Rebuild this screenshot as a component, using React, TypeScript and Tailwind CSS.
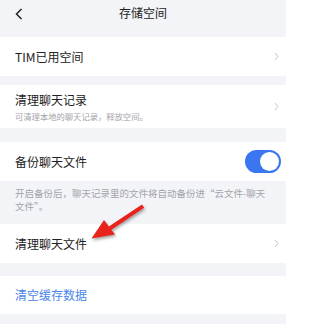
import React from "react";

function Chevron() {
  return (
    <svg width="5" height="9" viewBox="0 0 5 9" className="shrink-0">
      <path d="M1 1l3 3.5L1 8" fill="none" stroke="#c4c5cc" strokeWidth="1" />
    </svg>
  );
}

function Row({ title, sub, className = "" }: { title: string; sub?: string; className?: string }) {
  return (
    <div className={`flex items-center justify-between bg-white pl-[15px] pr-[7px] ${className}`}>
      <div className="flex flex-col">
        <span className="text-[12px] leading-[16px] text-[#222222]">{title}</span>
        {sub && <span className="mt-[3px] text-[8.3px] leading-[10px] text-[#a3a4aa]">{sub}</span>}
      </div>
      <Chevron />
    </div>
  );
}

export default function App() {
  return (
    <div
      className="relative h-[324px] w-[293px] overflow-hidden bg-white"
      style={{ fontFamily: '"Noto Sans CJK SC", "Noto Sans", sans-serif' }}
    >
      <div className="flex h-full w-[286px] flex-col bg-[#f3f4f8]">
        <div className="relative flex h-[26px] items-center justify-center">
          <svg width="8" height="12" viewBox="0 0 8 12" className="absolute left-[15px] top-[8px]">
            <path d="M6.5 1L1.5 6l5 5" fill="none" stroke="#222" strokeWidth="1.5" />
          </svg>
          <span className="text-[12px] leading-[16px] text-[#222222]">存储空间</span>
        </div>
        <div className="h-[11px]" />
        <Row title="TIM已用空间" className="h-[39px]" />
        <div className="h-[9px]" />
        <Row title="清理聊天记录" sub="可清理本地的聊天记录，释放空间。" className="h-[43px]" />
        <div className="h-[14px]" />
        <div className="flex h-[39px] items-center justify-between bg-white pl-[15px] pr-[5px]">
          <span className="text-[12px] leading-[16px] text-[#222222]">备份聊天文件</span>
          <div className="flex h-[23px] w-[36px] items-center justify-end rounded-full bg-[#3a76f0] pr-[2px]">
            <div className="h-[19px] w-[19px] rounded-full bg-white" />
          </div>
        </div>
        <div className="h-[43px] px-[15px] pt-[6px] text-[9.5px] leading-[12.5px] text-[#a3a4aa]">
          <p>开启备份后，聊天记录里的文件将自动备份进“云文件-聊天</p>
          <p>文件”。</p>
        </div>
        <Row title="清理聊天文件" className="h-[39px]" />
        <div className="h-[13px]" />
        <div className="flex h-[38px] items-center bg-white pl-[15px]">
          <span className="text-[12px] leading-[16px] text-[#4a85ea]">清空缓存数据</span>
        </div>
      </div>
      <svg
        className="pointer-events-none absolute left-0 top-0"
        width="293"
        height="324"
        viewBox="0 0 293 324"
        style={{ filter: "drop-shadow(1px 2px 1.5px rgba(0,0,0,0.35))" }}
      >
        <path d="M142 204.6L144.2 207.8L111 230L108.8 226.6Z" fill="#e8231c" />
        <path d="M91.5 238.5L104 220L115 234.5Z" fill="#e8231c" />
      </svg>
    </div>
  );
}
